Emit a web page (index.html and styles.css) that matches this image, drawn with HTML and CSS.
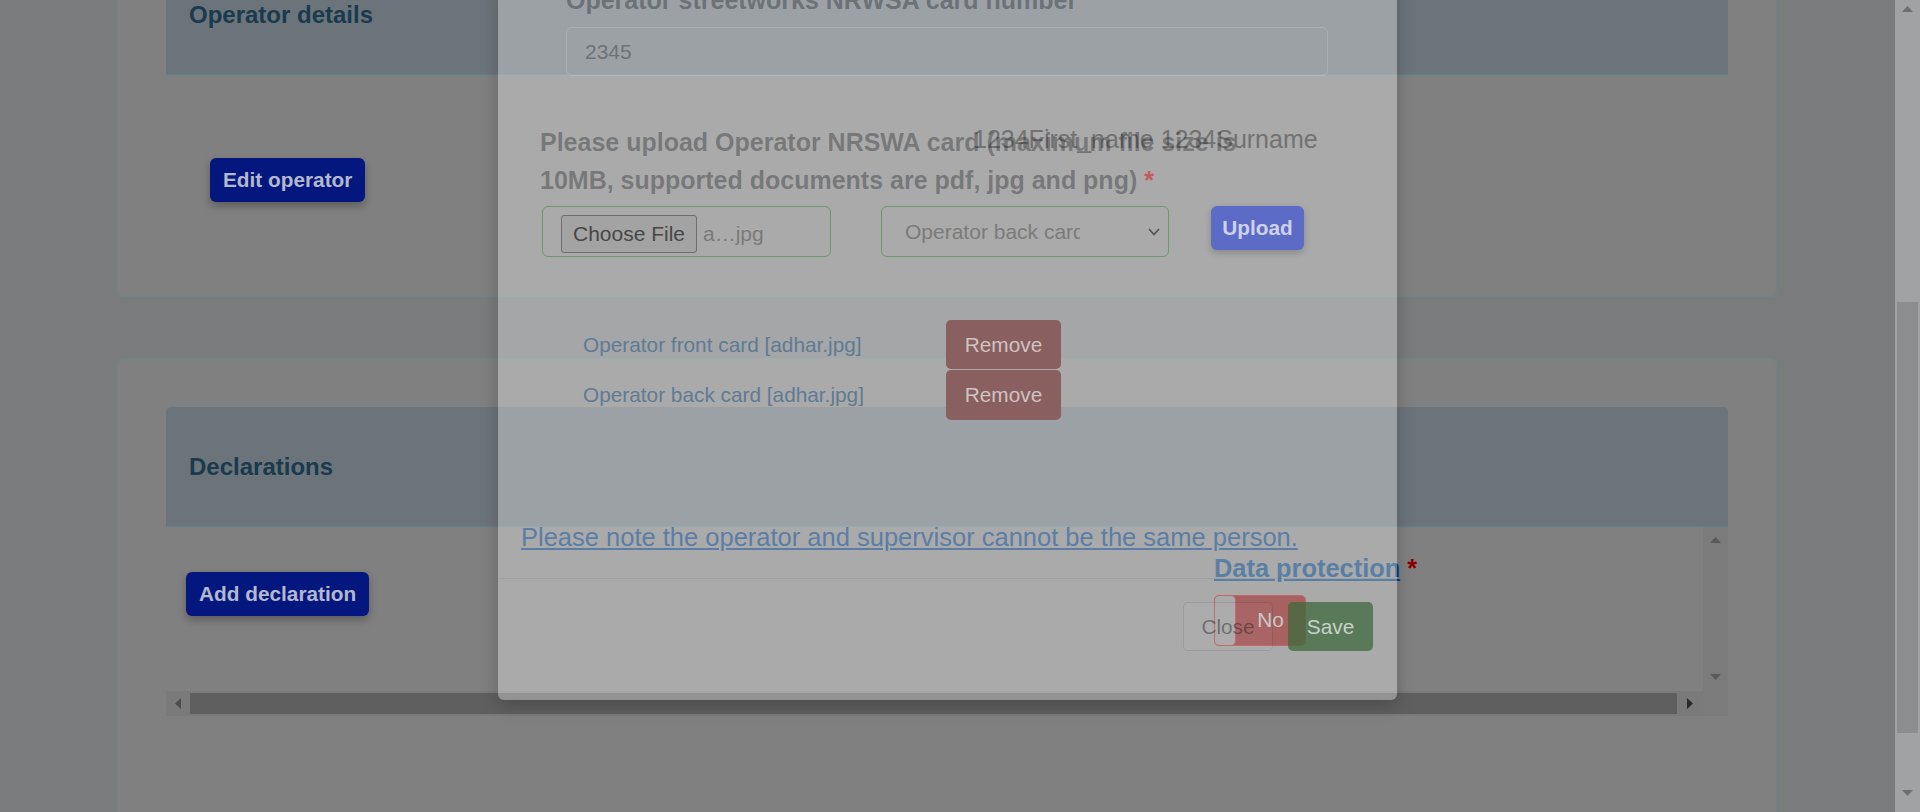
FILE: index.html
```html
<!DOCTYPE html>
<html lang="en">
<head>
<meta charset="utf-8">
<title>Operator details</title>
<link rel="stylesheet" href="styles.css">
</head>
<body>
<div class="viewport">
  <main class="content">
    <section class="card card-operator">
      <header class="card-head"><h2>Operator details</h2></header>
      <div class="op-body">
        <button class="btn-navy" type="button">Edit operator</button>
      </div>
    </section>
    <section class="card card-decl">
      <header class="card-head"><h2>Declarations</h2></header>
      <div class="scrollbox">
        <div class="sb-content">
          <button class="btn-navy" type="button">Add declaration</button>
        </div>
        <div class="vbar">
          <svg width="11" height="6" viewBox="0 0 11 6"><polygon points="0,6 11,6 5.5,0" fill="#5a5a5a"/></svg>
          <svg width="11" height="6" viewBox="0 0 11 6"><polygon points="0,0 11,0 5.5,6" fill="#5a5a5a"/></svg>
        </div>
        <div class="hbar">
          <div class="harrow harrow-l"><svg width="6" height="11" viewBox="0 0 6 11"><polygon points="6,0 6,11 0,5.5" fill="#4c4c4c"/></svg></div>
          <div class="hthumb"></div>
          <div class="harrow harrow-r"><svg width="6" height="11" viewBox="0 0 6 11"><polygon points="0,0 0,11 6,5.5" fill="#2a2a2a"/></svg></div>
        </div>
        <div class="corner"></div>
      </div>
    </section>
  </main>
  <div class="page-scroll">
    <div class="ps-arrow"><svg width="11" height="6" viewBox="0 0 11 6"><polygon points="0,6 11,6 5.5,0" fill="#6d6e70"/></svg></div>
    <div class="ps-thumb"></div>
    <div class="ps-arrow ps-down"><svg width="11" height="6" viewBox="0 0 11 6"><polygon points="0,0 11,0 5.5,6" fill="#6d6e70"/></svg></div>
  </div>
</div>

<span class="names">1234First_name 1234Surname</span>
<div class="dp"><a class="dp-link" href="#">Data protection</a> <span class="dp-req">*</span></div>
<div class="toggle"><span class="knob"></span><span class="toggle-no">No</span></div>

<div class="modal">
  <div class="m-body">
    <div class="m-field">
      <div class="m-label">Operator streetworks NRWSA card number</div>
      <div class="m-input">2345</div>
    </div>
    <div class="m-upload-title">Please upload Operator NRSWA card (maximum file size is 10MB, supported documents are pdf, jpg and png) <span class="m-req">*</span></div>
    <div class="m-files">
      <div class="filebox"><span class="choose">Choose File</span><span class="fname">a…jpg</span></div>
      <div class="selectbox"><span class="sel-text">Operator back card</span>
        <svg class="chev" width="12" height="8" viewBox="0 0 12 8"><polyline points="1,1 6,6.5 11,1" fill="none" stroke="#505050" stroke-width="1.6"/></svg>
      </div>
      <button class="btn-upload" type="button">Upload</button>
    </div>
    <div class="m-list">
      <div class="m-row"><span class="m-file">Operator front card [adhar.jpg]</span><button class="btn-remove" type="button">Remove</button></div>
      <div class="m-row"><span class="m-file">Operator back card [adhar.jpg]</span><button class="btn-remove" type="button">Remove</button></div>
    </div>
    <a class="m-note" href="#">Please note the operator and supervisor cannot be the same person.</a>
  </div>
  <div class="m-footer">
    <button class="btn-close" type="button">Close</button>
    <button class="btn-save" type="button">Save</button>
  </div>
</div>
</body>
</html>
```

FILE: styles.css
```css
html, body {
  margin: 0;
  height: 812px;
  overflow: hidden;
}
body {
  position: relative;
  background: #7a7b7d;
  font-family: "Liberation Sans", Arial, sans-serif;
}
button {
  font-family: "Liberation Sans", Arial, sans-serif;
  border: none;
  padding: 0;
  margin: 0;
  cursor: pointer;
}

.viewport {
  display: grid;
  grid-template-columns: 1fr 25px;
  height: 812px;
  overflow: hidden;
}
.content {
  padding: 0 118px 0 117px;
  min-width: 0;
  overflow: hidden;
}

/* cards */
.card {
  background: #808080;
  border: 1px solid #6b868a;
  border-radius: 6px;
  padding: 48px 48px 0;
}
.card-operator { margin-top: -94px; }
.card-decl { margin-top: 61px; padding-bottom: 220px; }
.card-head {
  box-sizing: border-box;
  height: 120px;
  background: #6c747b;
  border-bottom: 1px solid #62808a;
  border-radius: 5px 5px 0 0;
  display: flex;
  align-items: center;
  padding-left: 23px;
}
.card-head h2 {
  margin: 0;
  font-size: 24px;
  font-weight: bold;
  color: #1a3a4d;
}
.op-body { padding: 83px 0 94px 44px; }

.btn-navy {
  height: 44px;
  padding: 0 13px;
  background: #03177f;
  color: #b4b8cc;
  font-size: 20.8px;
  font-weight: bold;
  border-radius: 6px;
  box-shadow: 0 4px 8px rgba(0, 0, 0, 0.28);
}

/* declarations scroll box */
.scrollbox {
  display: grid;
  grid-template-columns: 1fr 25px;
  grid-template-rows: 164px 25px;
}
.sb-content { padding: 45px 0 0 20px; }
.vbar {
  background: #7b7b7b;
  display: flex;
  flex-direction: column;
  justify-content: space-between;
  align-items: center;
  padding: 10px 0 11px;
}
.hbar {
  background: #7a7a7a;
  display: flex;
  align-items: center;
}
.harrow { display: flex; justify-content: center; align-items: center; }
.harrow-l { width: 24px; }
.harrow-r { width: 26px; }
.hthumb { flex: 1; height: 21px; background: #5f5f5f; }
.corner { background: #7b7b7b; }

/* page scrollbar */
.page-scroll {
  background: #a1a2a4;
  display: flex;
  flex-direction: column;
  align-items: center;
}
.ps-arrow {
  height: 17px;
  display: flex;
  align-items: center;
  justify-content: center;
}
.ps-thumb {
  width: 21px;
  height: 431px;
  margin-top: 285px;
  background: #8c8d8f;
}
.ps-down { margin-top: auto; height: 22px; align-items: flex-start; }

/* page-level elements under the modal */
.names {
  position: absolute;
  left: 973px;
  top: 124px;
  font-size: 25px;
  line-height: 30px;
  color: #2e2e2e;
  white-space: nowrap;
}
.dp {
  position: absolute;
  left: 1214px;
  top: 553px;
  font-size: 25.4px;
  line-height: 30px;
  font-weight: bold;
  white-space: nowrap;
}
.dp-link { color: #0a407a; text-decoration: underline; }
.dp-req { color: #8b0000; }
.toggle {
  position: absolute;
  left: 1214px;
  top: 595px;
  width: 92px;
  height: 51px;
  box-sizing: border-box;
  background: #7d1414;
  border: 1px solid #a81c1c;
  border-radius: 5px;
  display: flex;
}
.knob {
  width: 20px;
  margin: -1px 0 -1px -1px;
  background: #808080;
  border: 1px solid #a81c1c;
  border-radius: 5px;
}
.toggle-no {
  flex: 1;
  display: flex;
  align-items: center;
  justify-content: center;
  font-size: 20.8px;
  color: #adadad;
  padding-bottom: 2px;
}

/* modal */
.modal {
  position: absolute;
  left: 498px;
  top: -19px;
  width: 899px;
  background: rgba(255, 255, 255, 0.33);
  border-radius: 6px;
  box-shadow: 0 5px 18px rgba(0, 0, 0, 0.22);
}
.m-body { padding: 0 23px 26px; }
.m-field { margin-left: 45px; }
.m-label {
  height: 38px;
  font-size: 25px;
  line-height: 38px;
  font-weight: bold;
  color: rgba(33, 37, 41, 0.4);
  white-space: nowrap;
}
.m-input {
  box-sizing: border-box;
  margin-top: 8px;
  width: 762px;
  height: 49px;
  border: 1px solid rgba(255, 255, 255, 0.16);
  border-radius: 6px;
  padding-left: 18px;
  display: flex;
  align-items: center;
  font-size: 21px;
  color: #6c7377;
}
.m-upload-title {
  margin: 47px 0 0 19px;
  width: 740px;
  font-size: 25px;
  line-height: 38px;
  font-weight: bold;
  color: rgba(33, 37, 41, 0.38);
}
.m-req { color: #c45a5a; }
.m-files {
  margin: 7px 0 0 21px;
  display: flex;
  align-items: flex-start;
}
.filebox, .selectbox {
  box-sizing: border-box;
  height: 51px;
  border: 1px solid #6d976f;
  border-radius: 6px;
  display: flex;
  align-items: center;
}
.filebox { width: 289px; padding: 8px 0 0 18px; align-items: flex-start; }
.choose {
  box-sizing: border-box;
  width: 136px;
  height: 38px;
  background: #a3a3a3;
  border: 1px solid #6e6e6e;
  border-radius: 3px;
  display: flex;
  align-items: center;
  justify-content: center;
  font-size: 21px;
  color: #474747;
}
.fname {
  margin-left: 6px;
  height: 38px;
  display: flex;
  align-items: center;
  font-size: 21px;
  color: #7a7a7a;
}
.selectbox {
  position: relative;
  width: 288px;
  margin-left: 50px;
  padding-left: 23px;
}
.sel-text {
  width: 175px;
  overflow: hidden;
  white-space: nowrap;
  font-size: 21px;
  color: #7b7b7b;
}
.chev { position: absolute; right: 8px; top: 21px; }
.btn-upload {
  margin-left: 42px;
  width: 93px;
  height: 44px;
  background: #5b6bc6;
  color: #cdd2ea;
  font-size: 20.8px;
  font-weight: bold;
  border-radius: 6px;
  box-shadow: 0 3px 7px rgba(0, 0, 0, 0.2);
}
.m-list { margin: 63px 0 0 62px; }
.m-row {
  height: 50px;
  display: flex;
  align-items: flex-start;
}
.m-file {
  width: 363px;
  height: 49px;
  display: flex;
  align-items: center;
  font-size: 20.8px;
  color: #5f7b94;
}
.btn-remove {
  width: 115px;
  height: 49px;
  background: #8a5f60;
  color: #cfc3c3;
  font-size: 20.8px;
  border-radius: 5px;
}
.m-row + .m-row .btn-remove { height: 50px; }
.m-note {
  display: block;
  margin-top: 102px;
  font-size: 25.5px;
  line-height: 30px;
  color: #5b7ea6;
  text-decoration: underline;
  white-space: nowrap;
}
.m-footer {
  border-top: 1px solid rgba(0, 0, 0, 0.06);
  padding: 23px 24px 49px;
  display: flex;
  justify-content: flex-end;
  gap: 15px;
}
.btn-close {
  box-sizing: border-box;
  width: 90px;
  height: 49px;
  background: rgba(255, 255, 255, 0.03);
  border: 1px solid rgba(0, 0, 0, 0.1);
  border-radius: 5px;
  font-size: 20.8px;
  color: rgba(30, 30, 30, 0.45);
}
.btn-save {
  width: 85px;
  height: 49px;
  background: rgba(61, 106, 61, 0.75);
  border-radius: 5px;
  font-size: 20.8px;
  color: #c9d1c9;
}
```
